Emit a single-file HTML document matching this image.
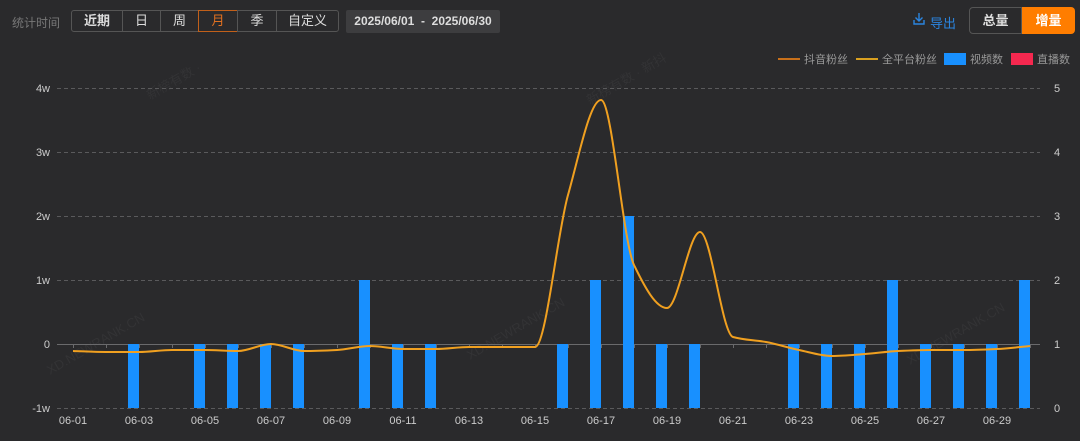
<!DOCTYPE html><html><head><meta charset="utf-8"><style>
body{margin:0;width:1080px;height:441px;background:#2a2a2c;font-family:"Liberation Sans","Noto Sans CJK SC",sans-serif;overflow:hidden;position:relative;color:#ccc}
.lbl{position:absolute;left:12px;top:14px;font-size:12px;color:#777}
.seg{position:absolute;top:10px;height:22px;border:1px solid #555;box-sizing:border-box;font-size:13px;color:#ddd;text-align:center;line-height:20px}
.date{position:absolute;left:346px;top:10px;width:154px;height:23px;background:#3d3d3f;border-radius:2px;font-size:12px;color:#ddd;line-height:23px;text-align:center;font-weight:bold}
svg{position:absolute;left:0;top:0}
</style></head><body>
<div class="lbl">统计时间</div>
<div class="seg" style="left:71px;width:52px;border-radius:3px 0 0 3px;font-weight:bold">近期</div>
<div class="seg" style="left:122px;width:39px">日</div>
<div class="seg" style="left:160px;width:39px">周</div>
<div class="seg" style="left:198px;width:40px;border-color:#c2601a;color:#e07020">月</div>
<div class="seg" style="left:237px;width:40px">季</div>
<div class="seg" style="left:276px;width:63px;border-radius:0 3px 3px 0">自定义</div>
<div class="date">2025/06/01 &nbsp;- &nbsp;2025/06/30</div>
<svg width="1080" height="441" style="z-index:1"><path d="M919 13v8M915.5 17.5l3.5 3.5 3.5-3.5M914 20v4h10v-4" fill="none" stroke="#2a85e0" stroke-width="1.4"/></svg>
<div style="position:absolute;left:930px;top:13px;color:#2a85e0;font-size:13px">导出</div>
<div style="position:absolute;left:969px;top:7px;width:53px;height:27px;border:1px solid #555;border-radius:4px 0 0 4px;box-sizing:border-box;font-size:13px;color:#ddd;text-align:center;line-height:25px;font-weight:bold">总量</div>
<div style="position:absolute;left:1022px;top:7px;width:53px;height:27px;background:#ff7d00;border-radius:0 4px 4px 0;font-size:13px;color:#fff;text-align:center;line-height:27px;font-weight:bold">增量</div>
<svg id="c" width="1080" height="441" font-family="Liberation Sans, Noto Sans CJK SC, sans-serif"></svg>
<script>
var s='';
s+='<line x1="778" y1="59" x2="800" y2="59" stroke="#c8701a" stroke-width="2"/><text x="804" y="63" font-size="11" fill="#999">抖音粉丝</text>';
s+='<line x1="856" y1="59" x2="878" y2="59" stroke="#d9a020" stroke-width="2"/><text x="882" y="63" font-size="11" fill="#999">全平台粉丝</text>';
s+='<rect x="944" y="53" width="22" height="12" fill="#1890ff"/><text x="970" y="63" font-size="11" fill="#999">视频数</text>';
s+='<rect x="1011" y="53" width="22" height="12" fill="#f5284f"/><text x="1037" y="63" font-size="11" fill="#999">直播数</text>';
s+='<text x="150" y="100" font-size="13" fill="#333335" transform="rotate(-30 150 100)">新榜有数 · </text>';
s+='<text x="590" y="105" font-size="13" fill="#333335" transform="rotate(-30 590 105)">新榜有数 · 新抖</text>';
s+='<text x="50" y="375" font-size="13" fill="#333335" transform="rotate(-30 50 375)">XD.NEWRANK.CN</text>';
s+='<text x="470" y="360" font-size="13" fill="#333335" transform="rotate(-30 470 360)">XD.NEWRANK.CN</text>';
s+='<text x="910" y="365" font-size="13" fill="#333335" transform="rotate(-30 910 365)">XD.NEWRANK.CN</text>';
var L=['4w','3w','2w','1w','0','-1w'],R=['5','4','3','2','1','0'];
for(var i=0;i<6;i++){var y=88+64*i;
 if(i!=4)s+='<line x1="57" y1="'+(y+.5)+'" x2="1040" y2="'+(y+.5)+'" stroke="#5a5a5c" stroke-dasharray="4,3"/>';
 s+='<text x="50" y="'+(y+4)+'" font-size="11" fill="#ccc" text-anchor="end">'+L[i]+'</text><text x="1054" y="'+(y+4)+'" font-size="11" fill="#ccc">'+R[i]+'</text>';}
s+='<line x1="57" y1="344.5" x2="1040" y2="344.5" stroke="#6a6a6c"/>';
var dx=function(d){return 73+(d-1)*33};
for(var d=1;d<=30;d++){s+='<line x1="'+(dx(d)+.5)+'" y1="344" x2="'+(dx(d)+.5)+'" y2="348" stroke="#6a6a6c"/>';
 if(d%2)s+='<text x="'+dx(d)+'" y="424" font-size="11" fill="#ccc" text-anchor="middle">06-'+(d<10?'0':'')+d+'</text>';}
var bars={3:1,5:1,6:1,7:1,8:1,10:2,11:1,12:1,16:1,17:2,18:3,19:1,20:1,23:1,24:1,25:1,26:2,27:1,28:1,29:1,30:2};
for(var k in bars){var v=bars[k],t=408-64*v;s+='<rect x="'+(dx(+k)-11)+'" y="'+t+'" width="11" height="'+(408-t)+'" fill="#1890ff"/>';}
var Y=[351,352,352,350,350,351,344,351,350,346,349,349,347,347,347,195,100,265,308,232,337,342,350,356,354,351,350,350,349,346];
var n=Y.length,h=33,dl=[],m=[];
for(var i=0;i<n-1;i++)dl.push((Y[i+1]-Y[i])/h);
m[0]=dl[0];m[n-1]=dl[n-2];
for(var i=1;i<n-1;i++){ if(dl[i-1]*dl[i]<=0)m[i]=0; else m[i]=2/(1/dl[i-1]+1/dl[i]); }
var p='M'+dx(1)+','+Y[0];
for(var i=0;i<n-1;i++){var x0=dx(i+1),x1=dx(i+2);
 p+=' C'+(x0+h/3)+','+(Y[i]+m[i]*h/3)+' '+(x1-h/3)+','+(Y[i+1]-m[i+1]*h/3)+' '+x1+','+Y[i+1];}
s+='<path d="'+p+'" fill="none" stroke="#f0a020" stroke-width="2"/>';
document.getElementById('c').innerHTML=s;
</script>
</body></html>
